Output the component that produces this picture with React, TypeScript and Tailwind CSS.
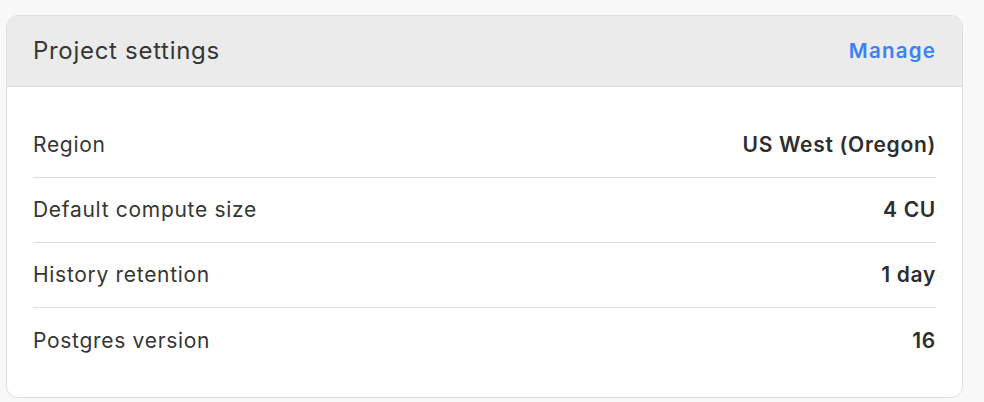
const rows = [
  { label: 'Region', value: 'US West (Oregon)' },
  { label: 'Default compute size', value: '4 CU' },
  { label: 'History retention', value: '1 day' },
  { label: 'Postgres version', value: '16' },
];

export default function App() {
  return (
    <div
      className="min-h-[402px] w-[984px] bg-[#f8f8f8] pl-[6px] pt-[15px]"
      style={{ fontFamily: 'Inter, "Noto Sans", sans-serif' }}
    >
      <div className="w-[957px] overflow-hidden rounded-[12px] border border-[#dedede] bg-white">
        <div className="flex h-[71px] items-center justify-between border-b border-[#dedede] bg-[#ebebeb] px-[26px]">
          <h2 className="text-[24px] font-normal tracking-[0.7px] text-[#363636]">Project settings</h2>
          <button className="text-[20.5px] font-semibold tracking-[1.2px] text-[#3b82f6]">Manage</button>
        </div>
        <div className="px-[26px] pb-[24px] pt-[26px]">
          {rows.map((row, i) => (
            <div
              key={row.label}
              className={`flex h-[65px] items-center justify-between text-[21px] tracking-[0.7px] ${
                i < rows.length - 1 ? 'border-b border-[#dedede]' : ''
              }`}
            >
              <span className="text-[#363636]">{row.label}</span>
              <span className="font-semibold text-[#2e2e2e]">{row.value}</span>
            </div>
          ))}
        </div>
      </div>
    </div>
  );
}
